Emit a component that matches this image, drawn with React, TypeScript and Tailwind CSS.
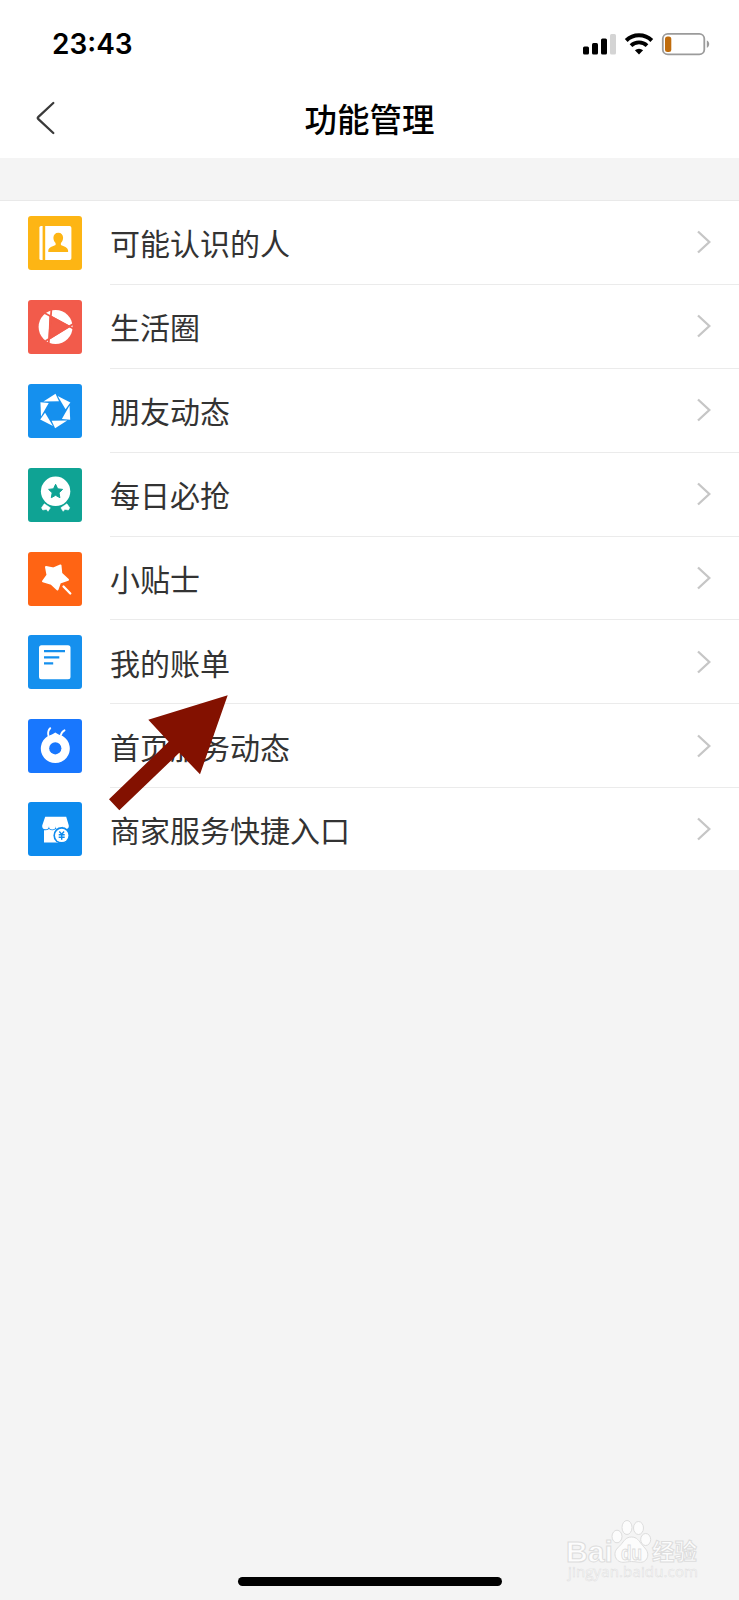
import type { ReactNode } from "react";

const ITEMS: { label: string; bg: string; icon: ReactNode }[] = [
  {
    label: "可能认识的人",
    bg: "bg-[#fdb514]",
    icon: (
      <>
        <path d="M13 10h1.6v34H13a1.6 1.6 0 0 1-1.6-1.6V11.600a1.600 1.600 0 0 1 1.600-1.600z" fill="#fff" />
        <path d="M17.200 10h24.400a1.800 1.800 0 0 1 1.800 1.800v30.400a1.800 1.800 0 0 1-1.800 1.800H17.200z" fill="#fff" />
        <path
          d="M30.300 16.700c3 0 4.800 2 4.800 5 0 2.200-.9 4.200-2.200 5.400v1.800c2.800 1.200 7 2.200 7.200 5.600V36H20.300v-1.500c.2-3.400 4.400-4.400 7.300-5.600v-1.800c-1.300-1.200-2.200-3.200-2.200-5.400 0-3 1.900-5 4.900-5z"
          fill="#fdb514"
        />
      </>
    ),
  },
  {
    label: "生活圈",
    bg: "bg-[#f25b4b]",
    icon: (
      <>
        <circle cx="27.600" cy="27" r="17" fill="#fff" />
        <path d="M22.300 16.500 41 26.500 21.500 38.500z" fill="#f25b4b" stroke="#f25b4b" strokeWidth="2" />
        <path d="M23.500 8 20.500 46M17 13.300 46.500 29.200M17.500 41 47 22.800" stroke="#f25b4b" strokeWidth="1.800" />
      </>
    ),
  },
  {
    label: "朋友动态",
    bg: "bg-[#1590ee]",
    icon: (
      <g fill="#fff" transform="translate(27.3 27)">
        {[0, 60, 120, 180, 240, 300].map((angle) => (
          <path key={angle} d="M-11.900-9.600.200-17.300 3.700-9.700z" transform={`rotate(${angle})`} />
        ))}
      </g>
    ),
  },
  {
    label: "每日必抢",
    bg: "bg-[#0fa394]",
    icon: (
      <>
        <circle cx="27.600" cy="23.300" r="14.700" fill="#fff" />
        <path
          d="m27.600 16.300 2.100 4.500 4.900.6-3.600 3.400.9 4.900-4.300-2.400-4.300 2.400.9-4.900-3.600-3.400 4.900-.6z"
          fill="#0fa394"
          stroke="#0fa394"
          strokeLinejoin="round"
        />
        <path d="M16.300 35.800 22.300 39.800 20 43.300 18.300 41.300 14.800 42 13.500 39.800z" fill="#fff" stroke="#fff" strokeWidth=".6" strokeLinejoin="round" />
        <path d="M38.900 35.800 32.900 39.800 35.200 43.300 36.900 41.300 40.400 42 41.700 39.800z" fill="#fff" stroke="#fff" strokeWidth=".6" strokeLinejoin="round" />
      </>
    ),
  },
  {
    label: "小贴士",
    bg: "bg-[#ff6414]",
    icon: (
      <>
        <path
          d="M18 15 25.500 16.500 32.500 13.500 33.300 21.500 40 27.700 32 30.500 29.500 37.500 23.300 31.800 15 29.300 19.500 23z"
          fill="#fff"
          stroke="#fff"
          strokeWidth="2"
          strokeLinejoin="round"
        />
        <path d="m35.500 34.500 6.800 7" stroke="#fff" strokeWidth="2.300" strokeLinecap="round" />
      </>
    ),
  },
  {
    label: "我的账单",
    bg: "bg-[#1590ee]",
    icon: (
      <>
        <rect x="11" y="10.200" width="31.500" height="34" rx="2.500" fill="#fff" />
        <path d="M16 16.200h21M16 22.300h15.300M16 28.400h9.200" stroke="#1590ee" strokeWidth="2.300" />
      </>
    ),
  },
  {
    label: "首页服务动态",
    bg: "bg-[#1877fe]",
    icon: (
      <>
        <path d="M27.300 13.500c2 1.600 4.600 2.500 7.400 3.600a14.500 14.500 0 1 1-14.800 0c2.800-1.100 5.400-2 7.400-3.600z" fill="#fff" />
        <circle cx="27.300" cy="29.300" r="6.100" fill="#1877fe" />
        <path d="M20.300 16.200c-.5-3 .1-5.300 1.900-7M32.900 16.200c.4-2.300 1.600-3.900 3.600-4.900" fill="none" stroke="#fff" strokeWidth="1.900" strokeLinecap="round" />
      </>
    ),
  },
  {
    label: "商家服务快捷入口",
    bg: "bg-[#0d8bee]",
    icon: (
      <>
        <path
          d="M17.200 14.800h21l2.600 8.700a3.300 3.300 0 0 1-6.600.7 3.300 3.300 0 0 1-6.600 0 3.300 3.300 0 0 1-6.600 0 3.300 3.300 0 0 1-6.800-.7z"
          fill="#fff"
        />
        <path d="M16 28.200c2 .4 3.600 0 5-1.200 2 1.600 4.600 1.600 6.600 0 2 1.600 4.600 1.600 6.600 0 1 .8 2 1.200 3.300 1.200v12.200H16z" fill="#fff" />
        <circle cx="33.700" cy="33.400" r="8.300" fill="#0d8bee" />
        <circle cx="33.700" cy="33.400" r="6.700" fill="#fff" />
        <path d="m31.300 29.500 2.400 2.600 2.400-2.600M33.700 32v5.800M30.700 32.700h6M30.700 35.200h6" fill="none" stroke="#0d8bee" strokeWidth="1.400" />
      </>
    ),
  },
];

function StatusBar() {
  return (
    <div className="flex h-[88px] items-center justify-between pl-[52px] pr-[29px]">
      <span className="font-[Inter] text-[28px] leading-none font-semibold text-black">23:43</span>
      <svg className="h-6 w-[128px]" viewBox="0 0 128 24" fill="none">
        <rect x="1" y="14.500" width="6" height="8" rx="1.500" fill="#000" />
        <rect x="10" y="11" width="6" height="11.500" rx="1.500" fill="#000" />
        <rect x="19" y="6.500" width="6" height="16" rx="1.500" fill="#000" />
        <rect x="28" y="2" width="6" height="20.500" rx="1.500" fill="#d4d4d4" />
        <path d="M44.200 8.500a18.300 18.300 0 0 1 25.600 0" stroke="#000" strokeWidth="4" />
        <path d="M49 13.600a11.500 11.500 0 0 1 16 0" stroke="#000" strokeWidth="3.800" />
        <path d="M57 22.600 52.900 18.300a5.900 5.900 0 0 1 8.200 0z" fill="#000" />
        <rect x="80.800" y="1.800" width="41.500" height="20.600" rx="5" stroke="#9b9b9b" strokeWidth="1.800" />
        <rect x="83" y="4.500" width="6.300" height="15.500" rx="2.500" fill="#c06c0c" />
        <path d="M124.800 8.500c3.200 1 3.200 6.200 0 7.200z" fill="#9b9b9b" />
      </svg>
    </div>
  );
}

function Header() {
  return (
    <div className="grid h-[70px] grid-cols-3 items-center pb-[10px]">
      <svg className="ml-[34px] h-9 w-6" viewBox="0 0 24 36" fill="none">
        <path d="M19.300 3 4.400 16.800a1.700 1.700 0 0 0 0 2.400L19.300 33" stroke="#3a3a3a" strokeWidth="2.300" strokeLinecap="round" />
      </svg>
      <h1 className="text-center text-[32.5px] leading-none font-medium whitespace-nowrap text-black">功能管理</h1>
    </div>
  );
}

function PointerArrow() {
  return (
    <svg className="absolute top-[695px] left-[109px] h-[116px] w-[119px]" viewBox="0 0 119 116">
      <path d="M118.700.300 39.300 24.700 59.700 46.700 0 104.300 10.300 115.300 70.300 57.700 91 79.300z" fill="#831100" />
    </svg>
  );
}

function Watermark() {
  return (
    <svg
      className="absolute top-[1516px] left-[562px] h-[74px] w-[142px]"
      viewBox="0 0 142 74"
      fill="#fcfcfc"
      stroke="#dddddd"
      strokeWidth="1"
    >
      <text x="4" y="45.500" textLength="47" lengthAdjust="spacingAndGlyphs" fontFamily="Liberation Sans" fontSize="29" fontWeight="700">
        Bai
      </text>
      <ellipse cx="55" cy="20.500" rx="5" ry="6.300" />
      <ellipse cx="65" cy="11.500" rx="5" ry="7" />
      <ellipse cx="76.500" cy="12" rx="5" ry="6.500" />
      <ellipse cx="83.700" cy="23.500" rx="5" ry="6" />
      <path d="M69.500 21c-5.500 0-7.500 4-10.500 7.500-3 3.300-6.500 5.500-6 10.500.5 4.500 4 7.300 8 7.300 3.500 0 5-.8 8.500-.8s5.500.8 9 .8c4.500 0 7.300-3.500 7.300-7.500 0-4.800-3.500-7-6-10.300C77 25 75 21 69.500 21z" />
      <text x="59" y="43.500" textLength="21" lengthAdjust="spacingAndGlyphs" fontFamily="Liberation Sans" fontSize="21" fontWeight="700">
        du
      </text>
      <text x="90" y="44" textLength="45" fontFamily="Noto Sans CJK SC" fontSize="22.500" fontWeight="700">
        经验
      </text>
      <text x="6" y="61" textLength="130" fontFamily="Open Sans" fontSize="15" strokeWidth=".5">
        jingyan.baidu.com
      </text>
    </svg>
  );
}

function App() {
  return (
    <div className="relative flex h-[1600px] w-[739px] flex-col overflow-hidden bg-[#f4f4f4] font-['Noto_Sans_CJK_SC',sans-serif]">
      <header className="bg-white">
        <StatusBar />
        <Header />
      </header>

      <ul className="mt-[42px] border-t border-[#e9e9e9] bg-white">
        {ITEMS.map((item) => (
          <li key={item.label} className="group flex h-[83.9px] items-center pl-[28px] last:h-[82px]">
            <div className={`size-[54px] shrink-0 rounded-[3px] ${item.bg}`}>
              <svg className="size-full" viewBox="0 0 54 54">
                {item.icon}
              </svg>
            </div>
            <div className="ml-[28px] flex h-full flex-1 items-center justify-between border-b border-[#ebebeb] pr-[27px] group-last:border-b-0">
              <span className="text-[30px] leading-none text-[#333333]">{item.label}</span>
              <svg className="h-6 w-4" viewBox="0 0 16 24" fill="none">
                <path d="M2 1.500 13.300 12 2 22.500" stroke="#c6c6c6" strokeWidth="2.300" />
              </svg>
            </div>
          </li>
        ))}
      </ul>

      <div className="mx-auto mt-auto mb-[14px] h-[9px] w-[264px] rounded-full bg-black" />

      <PointerArrow />
      <Watermark />
    </div>
  );
}

export default App;
